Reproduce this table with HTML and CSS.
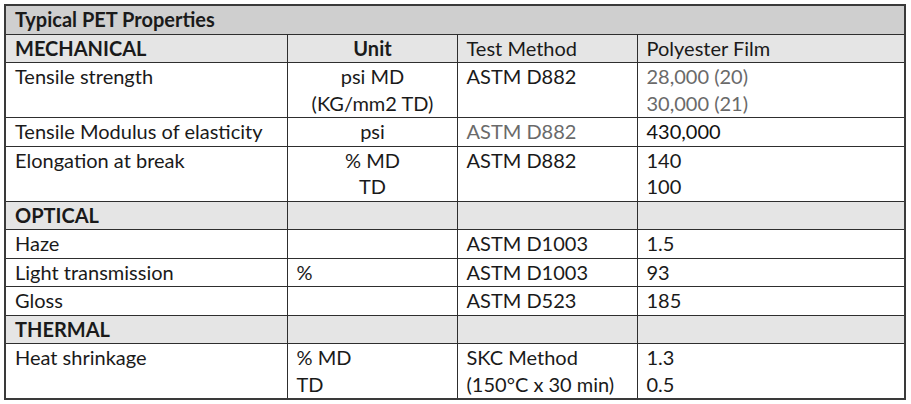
FILE: index.html
```html
<!DOCTYPE html>
<html>
<head>
<meta charset="utf-8">
<link rel="stylesheet" href="styles.css">
</head>
<body>
<table class="props">
  <colgroup>
    <col class="c1"><col class="c2"><col class="c3"><col class="c4">
  </colgroup>
  <tr class="title"><td colspan="4" class="b">Typical PET Properties</td></tr>
  <tr class="head"><td class="b">MECHANICAL</td><td class="b ctr">Unit</td><td>Test Method</td><td>Polyester Film</td></tr>
  <tr><td>Tensile strength</td><td class="ctr">psi MD<br>(KG/mm2 TD)</td><td>ASTM D882</td><td class="gray">28,000 (20)<br>30,000 (21)</td></tr>
  <tr><td>Tensile Modulus of elasticity</td><td class="ctr">psi</td><td class="gray">ASTM D882</td><td class="dark">430,000</td></tr>
  <tr><td>Elongation at break</td><td class="ctr">% MD<br>TD</td><td>ASTM D882</td><td>140<br>100</td></tr>
  <tr class="head"><td class="b">OPTICAL</td><td></td><td></td><td></td></tr>
  <tr><td>Haze</td><td></td><td>ASTM D1003</td><td>1.5</td></tr>
  <tr><td>Light transmission</td><td>%</td><td>ASTM D1003</td><td>93</td></tr>
  <tr><td>Gloss</td><td></td><td>ASTM D523</td><td>185</td></tr>
  <tr class="head"><td class="b">THERMAL</td><td></td><td></td><td></td></tr>
  <tr><td>Heat shrinkage</td><td>% MD<br>TD</td><td>SKC Method<br>(150°C x 30 min)</td><td>1.3<br>0.5</td></tr>
</table>
</body>
</html>
```
FILE: styles.css
```css
html, body {
  margin: 0;
  background: #ffffff;
}
body {
  padding: 4px 0 0 4px;
  font-family: Lato, "Liberation Sans", sans-serif;
  font-size: 20px;
  color: #1a1a1a;
}
.props {
  border-collapse: collapse;
  width: 902px;
  table-layout: fixed;
  border: 2px solid #3a3a3a;
}
.c1 { width: 282px; }
.c2 { width: 170px; }
.c3 { width: 180px; }
.c4 { width: auto; }
.props td {
  border: 1px solid #2e2e2e;
  padding: 0 8px 1px 9px;
  line-height: 26.5px;
  vertical-align: top;
  white-space: nowrap;
}
.title td {
  background: #cfcfcf;
}
.head td {
  background: #e5e5e5;
}
.b { font-weight: 700; }
.ctr { text-align: center; }
.gray { color: #6a6a6a; }
.dark { color: #111; }
```
